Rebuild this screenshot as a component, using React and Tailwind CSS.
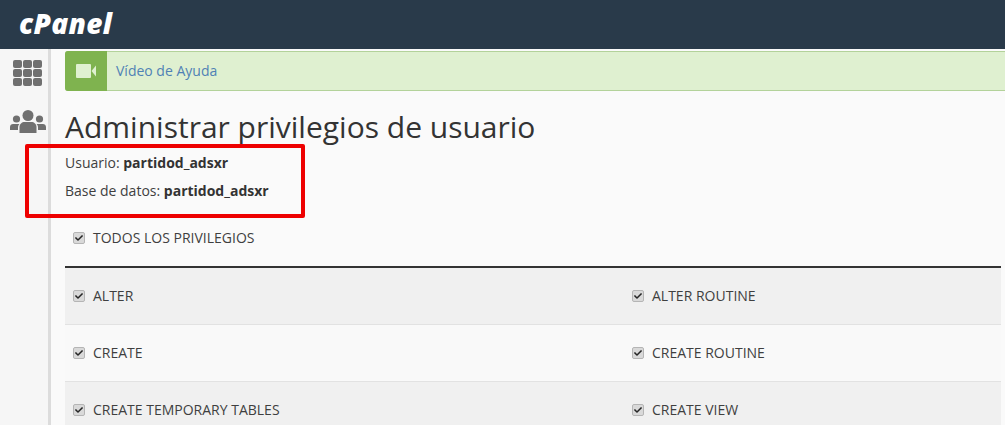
import { FaCheck } from "react-icons/fa"

const rows = [
  ["ALTER", "ALTER ROUTINE"],
  ["CREATE", "CREATE ROUTINE"],
  ["CREATE TEMPORARY TABLES", "CREATE VIEW"],
]

function Check({ label }) {
  return (
    <label className="flex items-center gap-[8px] text-[14px] leading-[20px] text-[#3f3f3f]">
      <span className="w-[12px] h-[12px] rounded-[2px] bg-[#d9d9d9] border border-[#b5b5b5] flex items-center justify-center">
        <FaCheck size={8} className="text-[#262626]" />
      </span>
      {label}
    </label>
  )
}

function GridIcon() {
  return (
    <div className="grid grid-cols-3 gap-[1px] w-[29px]">
      {Array.from({ length: 9 }).map((_, i) => (
        <span key={i} className="h-[8px] rounded-[2px] bg-[#707070]" />
      ))}
    </div>
  )
}

function UsersIcon() {
  return (
    <svg width="36" height="23" viewBox="0 0 36 23" className="text-[#707070]" fill="currentColor">
      <circle cx="18" cy="5.5" r="5.5" />
      <circle cx="6.500" cy="9" r="3.600" />
      <circle cx="29.500" cy="9" r="3.600" />
      <path d="M9.500 23v-6c0-3 2.500-5 5-5h7c2.500 0 5 2 5 5v6z" />
      <path d="M0 20v-3c0-2 1.500-3 3-3h6.500c-1 1-1.500 2-1.500 3.500V20z" />
      <path d="M36 20v-3c0-2-1.500-3-3-3h-6.500c1 1 1.500 2 1.500 3.500V20z" />
    </svg>
  )
}

function VideoIcon() {
  return (
    <svg width="20" height="14" viewBox="0 0 20 14" fill="#dff0d0">
      <rect x="0" y="0" width="15" height="14" rx="1" />
      <path d="M15.500 7 20 1.500v11z" />
    </svg>
  )
}

export default function App() {
  return (
    <div className="relative w-[1005px] h-[425px] overflow-hidden bg-[#fafafa] font-['Open_Sans',sans-serif]">
      <header className="h-[49px] bg-[#293a4a] flex items-center pl-[19px] pb-[4px]">
        <span className="text-white text-[28px] italic font-extrabold leading-none tracking-[0.3px]">cPanel</span>
      </header>
      <div className="flex h-[376px]">
        <aside className="w-[51px] shrink-0 bg-[#f6f6f6] border-r-[3px] border-[#dcdcdc] flex flex-col items-center pl-[7px] pt-[11px] gap-[24px]">
          <GridIcon />
          <UsersIcon />
        </aside>
        <main className="flex-1 pl-[14px] pt-[2px]">
          <div className="h-[40px] flex bg-[#dff0d0] border-y border-[#b3d29a] rounded-l-[3px]">
            <div className="w-[42px] -my-px bg-[#7fb34f] rounded-l-[3px] flex items-center justify-center">
              <VideoIcon />
            </div>
            <a className="pl-[9px] pb-[2px] flex items-center text-[14px] text-[#4f82b5]">Vídeo de Ayuda</a>
          </div>
          <h1 className="mt-[15px] text-[30px] leading-[42px] text-[#333333]">Administrar privilegios de usuario</h1>
          <p className="mt-[5px] text-[14px] leading-[20px] text-[#3f3f3f]">Usuario: <b className="text-[#333333]">partidod_adsxr</b></p>
          <p className="mt-[8px] text-[14px] leading-[20px] text-[#3f3f3f]">Base de datos: <b className="text-[#333333]">partidod_adsxr</b></p>
          <div className="mt-[27px] pl-[8px] h-[20px] flex items-center">
            <Check label="TODOS LOS PRIVILEGIOS" />
          </div>
          <div className="mt-[18px] mr-[4px] border-t-2 border-[#333333]">
            {rows.map((r, i) => (
              <div key={i} className={`h-[57px] grid grid-cols-[559px_1fr] items-center pl-[8px] border-b border-[#e2e2e2] ${i % 2 === 0 ? "bg-[#f0f0f0]" : "bg-[#f9f9f9]"}`}>
                <Check label={r[0]} />
                <Check label={r[1]} />
              </div>
            ))}
          </div>
        </main>
      </div>
      <div className="absolute left-[25px] top-[144px] w-[280px] h-[74px] border-4 border-[#ee0000] rounded-[2px]" />
    </div>
  )
}
